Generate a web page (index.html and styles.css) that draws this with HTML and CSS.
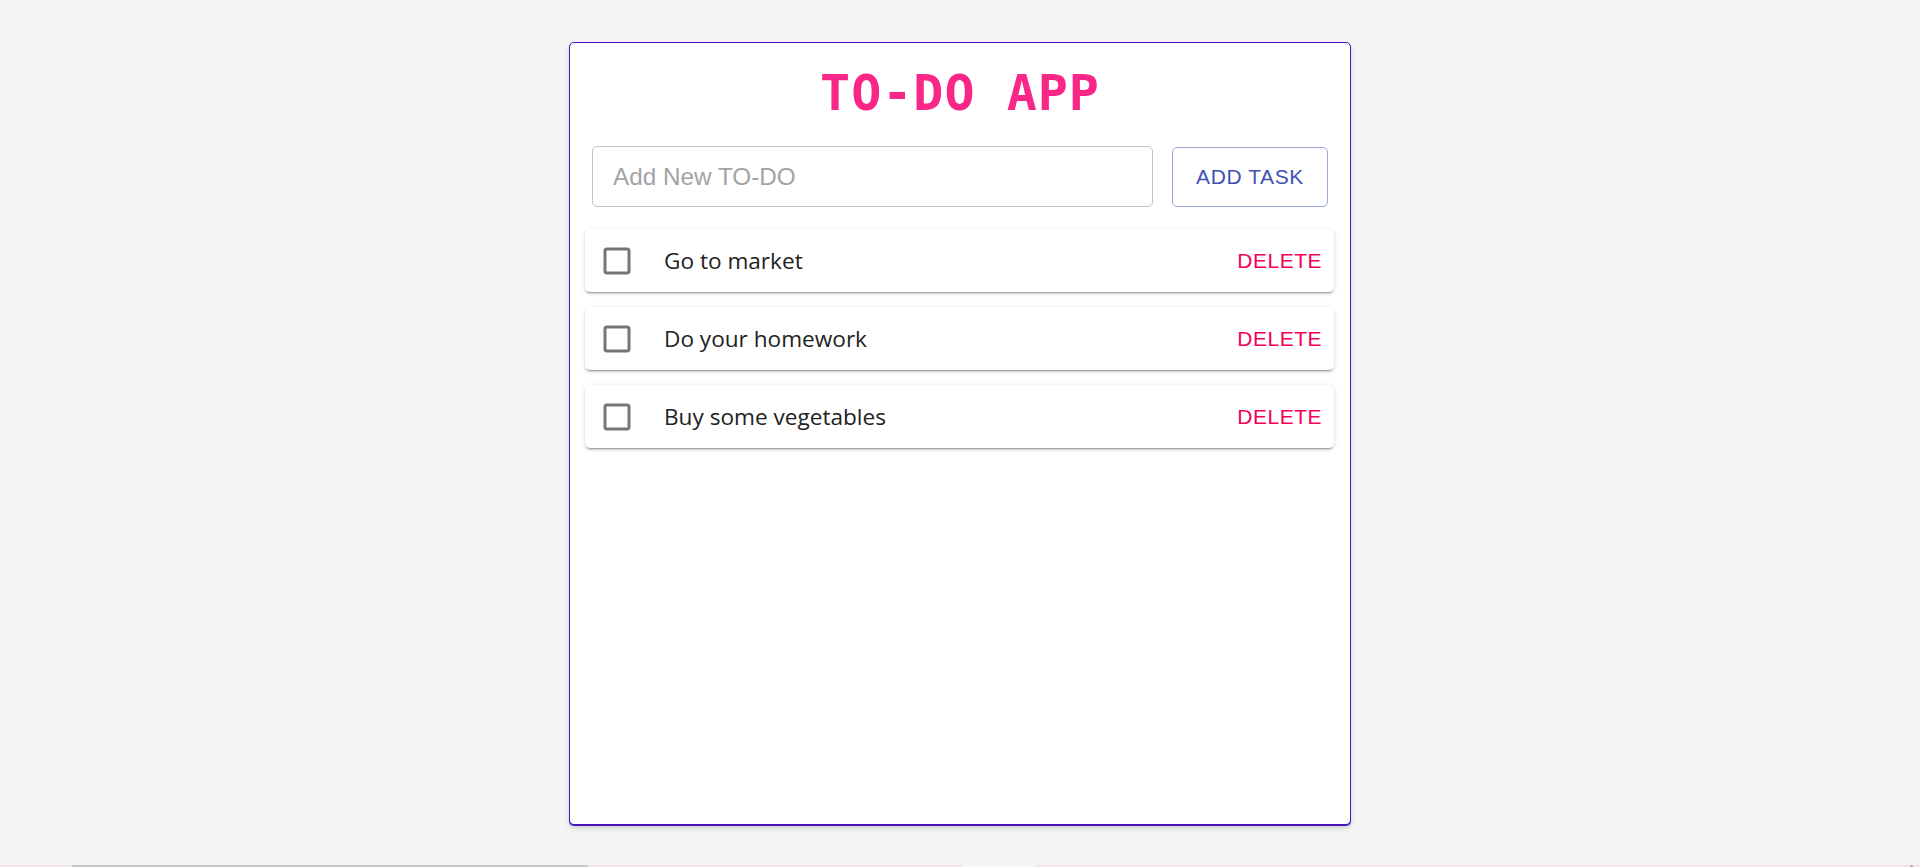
FILE: index.html
```html
<!DOCTYPE html>
<html lang="en">
<head>
<meta charset="utf-8">
<title>TO-DO APP</title>
<link rel="stylesheet" href="styles.css">
</head>
<body>
<div class="page">
  <main class="card">
    <h1 class="title">TO-DO APP</h1>
    <form class="add-row" onsubmit="return false">
      <input class="task-input" type="text" placeholder="Add New TO-DO">
      <button class="add-btn" type="submit">ADD TASK</button>
    </form>
    <ul class="task-list">
      <li class="task">
        <svg class="check" viewBox="0 0 24 24" aria-hidden="true"><path d="M19 5v14H5V5h14m0-2H5c-1.1 0-2 .9-2 2v14c0 1.1.9 2 2 2h14c1.1 0 2-.9 2-2V5c0-1.1-.9-2-2-2z"/></svg>
        <span class="task-text">Go to market</span>
        <button class="del-btn" type="button">DELETE</button>
      </li>
      <li class="task">
        <svg class="check" viewBox="0 0 24 24" aria-hidden="true"><path d="M19 5v14H5V5h14m0-2H5c-1.1 0-2 .9-2 2v14c0 1.1.9 2 2 2h14c1.1 0 2-.9 2-2V5c0-1.1-.9-2-2-2z"/></svg>
        <span class="task-text">Do your homework</span>
        <button class="del-btn" type="button">DELETE</button>
      </li>
      <li class="task">
        <svg class="check" viewBox="0 0 24 24" aria-hidden="true"><path d="M19 5v14H5V5h14m0-2H5c-1.1 0-2 .9-2 2v14c0 1.1.9 2 2 2h14c1.1 0 2-.9 2-2V5c0-1.1-.9-2-2-2z"/></svg>
        <span class="task-text">Buy some vegetables</span>
        <button class="del-btn" type="button">DELETE</button>
      </li>
    </ul>
  </main>
</div>
<div class="bottom-strip">
  <span class="seg seg-a"></span>
  <span class="seg seg-thumb"></span>
  <span class="seg seg-b"></span>
  <span class="seg seg-light"></span>
  <span class="seg seg-c"></span>
  <span class="seg seg-mark"></span>
  <span class="seg seg-d"></span>
</div>
</body>
</html>
```

FILE: styles.css
```css
html, body {
  margin: 0;
  padding: 0;
}

body {
  background: #f4f4f4;
  font-family: "Liberation Sans", Arial, sans-serif;
  overflow: hidden;
}

.page {
  min-height: 865px;
  box-sizing: border-box;
  padding-top: 42px;
  display: flex;
  justify-content: center;
  align-items: flex-start;
}

.card {
  width: 782px;
  height: 783px;
  box-sizing: border-box;
  background: #fff;
  border: 1px solid #4a14b8;
  border-radius: 5px;
  box-shadow: 0 1px 0 #4a14b8, 0 3px 5px rgba(0, 0, 0, 0.16);
  padding-top: 20px;
  display: flex;
  flex-direction: column;
}

.title {
  margin: 0;
  text-align: center;
  font-family: "DejaVu Sans Mono", monospace;
  font-weight: bold;
  font-size: 50px;
  letter-spacing: 1px;
  line-height: 60px;
  color: #f92888;
}

.add-row {
  margin: 23px 0 0;
  padding: 0 22px;
  display: flex;
  align-items: center;
  gap: 19px;
}

.task-input {
  flex: 1;
  height: 61px;
  box-sizing: border-box;
  border: 1px solid #c4c4c4;
  border-radius: 5px;
  padding: 0 20px;
  font-family: "Liberation Sans", Arial, sans-serif;
  font-size: 24.3px;
  color: #222;
  outline: none;
  background: #fff;
}

.task-input::placeholder {
  color: #a3a3a3;
}

.add-btn {
  width: 156px;
  height: 60px;
  box-sizing: border-box;
  border: 1px solid #9da6dc;
  border-radius: 5px;
  background: #fff;
  color: #3f51b5;
  font-family: "Liberation Sans", Arial, sans-serif;
  font-size: 21px;
  letter-spacing: 0.6px;
  padding: 0;
  cursor: pointer;
}

.task-list {
  list-style: none;
  margin: 22px 0 0;
  padding: 0 16px 0 15px;
  display: flex;
  flex-direction: column;
  gap: 15px;
}

.task {
  height: 63px;
  box-sizing: border-box;
  background: #fff;
  border-radius: 5px;
  box-shadow: 0 3px 1px -2px rgba(0, 0, 0, 0.2), 0 2px 2px 0 rgba(0, 0, 0, 0.14), 0 1px 5px 0 rgba(0, 0, 0, 0.12);
  display: flex;
  align-items: center;
  padding: 0 12px 0 14px;
}

.check {
  width: 36px;
  height: 36px;
  fill: #767676;
  flex: none;
}

.task-text {
  margin-left: 29px;
  flex: 1;
  font-family: "Open Sans", "Noto Sans", sans-serif;
  font-size: 22.6px;
  line-height: 30px;
  color: #222;
  padding-top: 1px;
}

.del-btn {
  border: none;
  background: transparent;
  padding: 0;
  color: #f50057;
  font-family: "Liberation Sans", Arial, sans-serif;
  font-size: 21px;
  letter-spacing: 0.5px;
  cursor: pointer;
}

.bottom-strip {
  height: 2px;
  display: flex;
}

.seg {
  display: block;
  height: 2px;
}

.seg-a { width: 72px; background: #f3e3ee; }
.seg-thumb { width: 516px; background: #c8c8c8; }
.seg-b { width: 374px; background: #f3e3ee; }
.seg-light { width: 73px; background: #fbf3f8; }
.seg-c { width: 875px; background: #f2e5ec; }
.seg-mark { width: 3px; background: #b9b0b6; }
.seg-d { flex: 1; background: #f2e5ec; }
```
